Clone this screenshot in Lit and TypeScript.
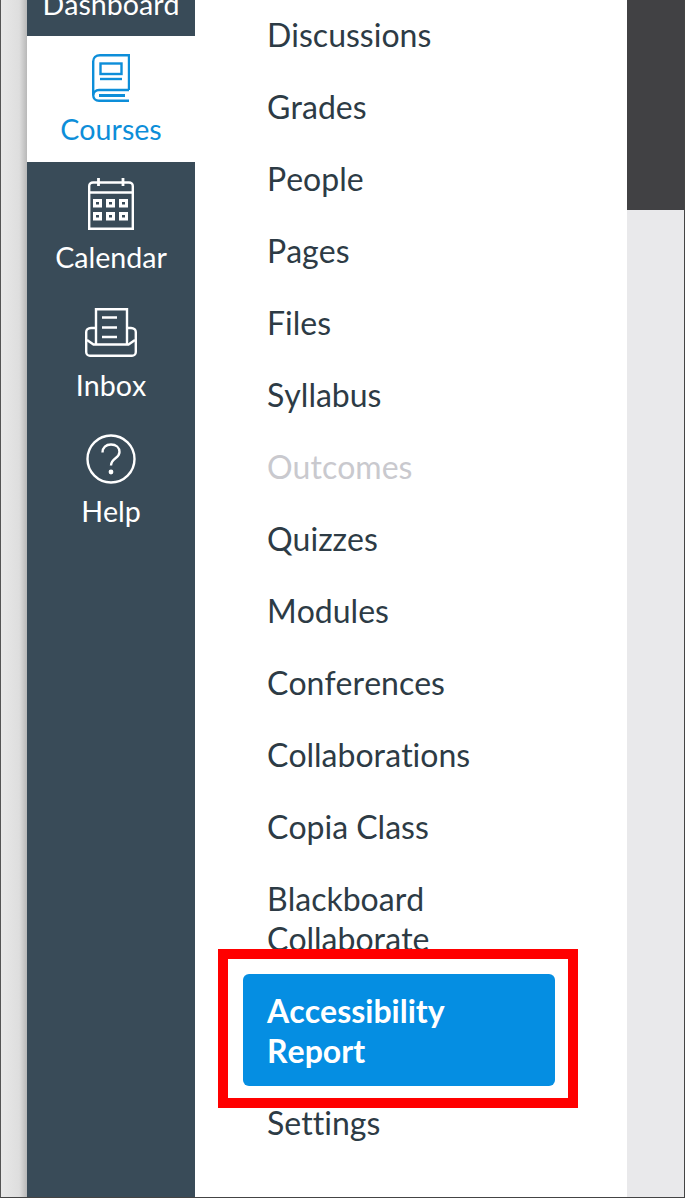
import { LitElement, css, html, svg } from "lit";
import { customElement } from "lit/decorators.js";

type NavItem = {
  label: string;
  icon: unknown;
  height: number;
  gap: number;
  active?: boolean;
};

const bookIcon = svg`<svg width="38" height="48" viewBox="0 0 38 48" fill="none" stroke="currentColor" stroke-width="2.4">
  <path d="M37 36V1.2H8C4 1.2 1.2 3.5 1.2 7.5V41C1.2 44.5 3.5 46.8 7 46.8H37" />
  <path d="M37 36H7C3.5 36 1.2 38.5 1.2 41" />
  <path d="M7 41.5H33" stroke-width="3" />
  <rect x="8.5" y="9.5" width="21" height="10.5" />
  <path d="M8 25H30" />
</svg>`;

const calendarIcon = svg`<svg width="46" height="52" viewBox="0 0 46 52" fill="none" stroke="currentColor" stroke-width="2.4">
  <path d="M5 4.5H41C43 4.5 44.8 6 44.8 8V50.8H1.2V8C1.2 6 3 4.5 5 4.5Z" />
  <path d="M1.2 14.5H44.8" />
  <path d="M10.5 0V8M35 0V8" stroke-width="2.8" />
  <g fill="currentColor" stroke="none">
    <path fill-rule="evenodd" d="M5 21H14V29.5H5ZM8 24V26.5H11V24Z" />
    <path fill-rule="evenodd" d="M18 21H27V29.5H18ZM21 24V26.5H24V24Z" />
    <path fill-rule="evenodd" d="M31 21H40V29.5H31ZM34 24V26.5H37V24Z" />
    <path fill-rule="evenodd" d="M5 34H14V42.5H5ZM8 37V39.5H11V37Z" />
    <path fill-rule="evenodd" d="M18 34H27V42.5H18ZM21 37V39.5H24V37Z" />
    <path fill-rule="evenodd" d="M31 34H40V42.5H31ZM34 37V39.5H37V37Z" />
  </g>
</svg>`;

const inboxIcon = svg`<svg width="52" height="49" viewBox="0 0 52 49" fill="none" stroke="currentColor" stroke-width="2.4">
  <path d="M11 36V1.2H42V36" />
  <path d="M17 9.5H32M17 19.5H32M17 29H32" />
  <path d="M11 20H6C3 20 1.2 22 1.2 24V44C1.2 46.2 3 47.8 5 47.8H47C49 47.8 50.8 46.2 50.8 44V24C50.8 22 49 20 46 20H42" />
  <path d="M2 32L8.5 36.5H43.5L50 32" />
</svg>`;

const helpIcon = svg`<svg width="50" height="50" viewBox="0 0 50 50" fill="none" stroke="currentColor" stroke-width="2.4">
  <circle cx="25" cy="25" r="23.5" />
  <path d="M16.5 18.5C16.5 13.5 20 10.5 25 10.5C30 10.5 33.5 13.5 33.5 18C33.5 24.5 25 24 25 31.5" />
  <circle cx="25" cy="38" r="2.4" fill="currentColor" stroke="none" />
</svg>`;

const NAV: NavItem[] = [
  { label: "Courses", icon: bookIcon, height: 126, gap: 6, active: true },
  { label: "Calendar", icon: calendarIcon, height: 128, gap: 8 },
  { label: "Inbox", icon: inboxIcon, height: 127, gap: 8 },
  { label: "Help", icon: helpIcon, height: 127, gap: 7 },
];

const MENU = [
  "Discussions",
  "Grades",
  "People",
  "Pages",
  "Files",
  "Syllabus",
  "Outcomes",
  "Quizzes",
  "Modules",
  "Conferences",
  "Collaborations",
  "Copia Class",
  "Blackboard Collaborate",
  "Accessibility Report",
  "Settings",
];

@customElement("app-root")
export class AppRoot extends LitElement {
  render() {
    return html`
      <div class="page">
        <div class="edge"></div>
        <nav class="nav">
          <div class="nav-top">Dashboard</div>
          ${NAV.map(
            (item) => html`
              <div
                class="nav-item ${item.active ? "active" : ""}"
                style="height: ${item.height}px"
              >
                <span class="nav-icon">${item.icon}</span>
                <span class="nav-label" style="margin-top: ${item.gap}px">${item.label}</span>
              </div>
            `
          )}
        </nav>
        <main class="panel">
          <ul class="menu">
            ${MENU.map(
              (label) => html`
                <li
                  class="menu-item ${label === "Outcomes" ? "muted" : ""} ${label ===
                  "Accessibility Report"
                    ? "selected"
                    : ""}"
                >
                  ${label}
                </li>
              `
            )}
          </ul>
          <div class="highlight"></div>
        </main>
        <aside class="side">
          <div class="side-dark"></div>
        </aside>
      </div>
    `;
  }

  static styles = css`
    :host {
      display: block;
      font-family: Lato, "Liberation Sans", sans-serif;
      font-kerning: none;
      font-variant-ligatures: none;
    }
    .page {
      display: grid;
      grid-template-columns: 26px 168px 432px 1fr;
      width: 685px;
      height: 1198px;
      box-sizing: border-box;
      overflow: hidden;
      background: #fff;
      border-left: 1px solid #555;
      border-right: 1px solid #444;
      border-bottom: 1px solid #444;
    }
    .edge {
      background: linear-gradient(to right, #e8e8e8, #dedede 70%, #b8b8b8);
    }
    .nav {
      background: #394b58;
      color: #fff;
      font-size: 28.6px;
      text-align: center;
      overflow: hidden;
    }
    .nav-top {
      height: 36px;
      line-height: 8px;
    }
    .nav-item {
      display: flex;
      flex-direction: column;
      align-items: center;
      box-sizing: border-box;
      padding-top: 14px;
    }
    .nav-item.active {
      background: #fff;
      color: #0d8ed9;
    }
    .nav-icon {
      display: flex;
      align-items: center;
      justify-content: center;
      height: 56px;
    }
    .nav-label {
      line-height: 34px;
    }
    .panel {
      position: relative;
      background: #fff;
      overflow: hidden;
    }
    .menu {
      list-style: none;
      margin: -2px 0 0;
      padding: 0 48px;
    }
    .menu-item {
      padding: 17px 24px 15px;
      width: 312px;
      box-sizing: border-box;
      font-size: 32px;
      line-height: 40px;
      color: #2d3b45;
    }
    .menu-item.muted {
      color: #c9c9ce;
    }
    .menu-item.selected {
      background: #058ee2;
      color: #fff;
      font-weight: 700;
      border-radius: 6px;
    }
    .highlight {
      position: absolute;
      left: 23px;
      top: 949px;
      width: 360px;
      height: 159px;
      box-sizing: border-box;
      border: 10px solid #f00;
    }
    .side {
      background: #e9e9eb;
    }
    .side-dark {
      height: 210px;
      background: #414144;
    }
  `;
}
